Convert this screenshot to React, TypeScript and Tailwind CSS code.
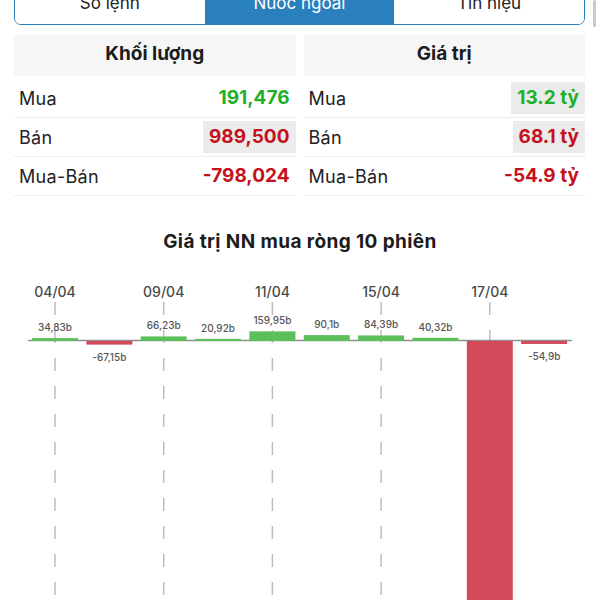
import React from "react";

const TABS = ["Sổ lệnh", "Nước ngoài", "Tín hiệu"] as const;

type Cell = { label: string; value: string; tone: "up" | "down"; hl?: boolean };

const VOLUME: Cell[] = [
  { label: "Mua", value: "191,476", tone: "up" },
  { label: "Bán", value: "989,500", tone: "down", hl: true },
  { label: "Mua-Bán", value: "-798,024", tone: "down" },
];

const VALUE: Cell[] = [
  { label: "Mua", value: "13.2 tỷ", tone: "up", hl: true },
  { label: "Bán", value: "68.1 tỷ", tone: "down", hl: true },
  { label: "Mua-Bán", value: "-54.9 tỷ", tone: "down" },
];

// 10 sessions, net foreign value (billions)
const SESSIONS = [
  { date: "04/04", v: 34.83, label: "34,83b" },
  { date: "", v: -67.15, label: "-67,15b" },
  { date: "09/04", v: 66.23, label: "66,23b" },
  { date: "", v: 20.92, label: "20,92b" },
  { date: "11/04", v: 159.95, label: "159,95b" },
  { date: "", v: 90.1, label: "90,1b" },
  { date: "15/04", v: 84.39, label: "84,39b" },
  { date: "", v: 40.32, label: "40,32b" },
  { date: "17/04", v: -6200, label: "" },
  { date: "", v: -54.9, label: "-54,9b" },
];

const ZERO = 70;
const SCALE = 0.054;
const colX = (i: number) => 55 + i * 54.35;

function Panel({ title, rows }: { title: string; rows: Cell[] }) {
  return (
    <div className="flex flex-col">
      <div className="h-[41px] mb-[3px] pb-[2px] bg-[#f6f6f6] flex items-center justify-center text-[19px] font-bold text-[#1c1c1c]">
        {title}
      </div>
      {rows.map((r) => (
        <div
          key={r.label}
          className="h-[39px] border-b border-[#ededed] flex items-center justify-between pl-[5px]"
        >
          <span className="text-[18px] tracking-[0.3px] text-[#222]">{r.label}</span>
          <span
            className={`h-[32px] flex items-center pl-[6px] pr-[6px] text-[19px] font-bold ${
              r.hl ? "bg-[#ebebeb]" : ""
            } ${r.tone === "up" ? "text-[#1fb02a]" : "text-[#c4111b]"}`}
          >
            {r.value}
          </span>
        </div>
      ))}
    </div>
  );
}

function NetChart() {
  return (
    <svg width={600} height={340} className="block" style={{ fontFamily: "Inter, sans-serif" }}>
      {/* date ticks + dashed guides */}
      {SESSIONS.map((s, i) =>
        s.date ? (
          <g key={`d${i}`}>
            <text
              x={colX(i)}
              y={21}
              textAnchor="middle"
              dominantBaseline="central"
              fontSize={14}
              fontWeight={500}
              fill="#4a4a4a"
            >
              {s.date}
            </text>
            <line
              x1={colX(i)}
              x2={colX(i)}
              y1={32}
              y2={340}
              stroke="#bdbdbd"
              strokeWidth={1.5}
              strokeDasharray="13 15"
            />
          </g>
        ) : null
      )}
      <line x1={28} x2={572} y1={ZERO + 0.5} y2={ZERO + 0.5} stroke="#8e8e8e" strokeWidth={1.5} />
      {SESSIONS.map((s, i) => {
        const cx = colX(i);
        const h = Math.max(1, Math.abs(s.v) * SCALE);
        const up = s.v >= 0;
        return (
          <g key={i}>
            {up ? (
              <rect x={cx - 23} y={ZERO - h} width={46} height={h + 1} fill="#5cbf5c" />
            ) : (
              <rect x={cx - 23} y={ZERO + 1} width={46} height={h} fill="#d34b5b" />
            )}
            {s.label && (
              <text
                x={cx}
                y={up ? ZERO - h - 11 : ZERO + 1 + h + 12}
                textAnchor="middle"
                dominantBaseline="central"
                fontSize={10}
                fontWeight={500}
                fill="#555"
              >
                {s.label}
              </text>
            )}
          </g>
        );
      })}
    </svg>
  );
}

export default function App() {
  return (
    <div
      className="relative w-[600px] h-[600px] overflow-hidden bg-white"
      style={{ fontFamily: "Inter, 'Noto Sans', sans-serif" }}
    >
      {/* scroll indicator */}
      <div className="absolute right-[4px] top-0 w-[3px] h-[27px] rounded-full bg-[#c9c9c9]" />

      <div className="pl-[14px] pr-[15px] -mt-[27px]">
        {/* Segmented tabs */}
        <div className="grid grid-cols-3 h-[52px] border border-[#2a7fbd] rounded-b-[7px] overflow-hidden">
          {TABS.map((t, i) => (
            <div
              key={t}
              className={`flex items-center justify-center pt-[9px] text-[17px] ${
                i === 1 ? "bg-[#2a7fbd] text-white" : "bg-white text-[#222]"
              }`}
            >
              {t}
            </div>
          ))}
        </div>

        {/* Summary tables */}
        <div className="grid grid-cols-2 gap-2 mt-[10px]">
          <Panel title="Khối lượng" rows={VOLUME} />
          <Panel title="Giá trị" rows={VALUE} />
        </div>
      </div>

      <div className="mt-[33px] text-center text-[19px] leading-[26px] tracking-[0.4px] font-bold text-[#1c1c1c]">
        Giá trị NN mua ròng 10 phiên
      </div>
      <div className="mt-[15px]">
        <NetChart />
      </div>
    </div>
  );
}
